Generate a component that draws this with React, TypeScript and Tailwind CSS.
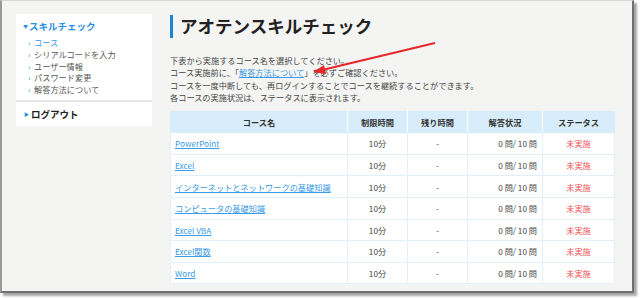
const courses = [
  "PowerPoint",
  "Excel",
  "インターネットとネットワークの基礎知識",
  "コンピュータの基礎知識",
  "Excel VBA",
  "Excel関数",
  "Word",
];

const menu = ["コース", "シリアルコードを入力", "ユーザー情報", "パスワード変更", "解答方法について"];

export default function App() {
  return (
    <div className="w-[640px] h-[298px] bg-white overflow-hidden" style={{ fontFamily: '"Noto Sans CJK JP", "Noto Sans", sans-serif' }}>
      <div className="relative w-[634px] h-[293px] bg-[#f4f4f3] border-l-2 border-r-2 border-b-2 border-t border-l-[#9a9a9a] border-r-[#6f6f6f] border-b-[#6f6f6f] border-t-[#d8d8d8] shadow-[3px_3px_2px_rgba(0,0,0,0.35)] flex pt-[13px] pl-[14px]">
        {/* sidebar */}
        <div className="w-[136px] shrink-0">
          <div className="bg-white pt-[6px] pb-[7px] h-[86px]">
            <div className="flex items-center pl-[7px] text-[9.5px] leading-[12px] font-bold text-[#2a8fe0]">
              <span className="text-[5px] mr-[1px]">▼</span>スキルチェック
            </div>
            <ul className="mt-[5px] pl-[12px] text-[8.2px] leading-[11.8px] text-[#555]">
              {menu.map((m, i) => (
                <li key={m} className="flex items-center">
                  <span className="text-[#2a8fe0] text-[8px] w-[6px]">›</span>
                  <span className={i === 0 ? "text-[#3a9be6]" : ""}>{m}</span>
                </li>
              ))}
            </ul>
          </div>
          <div className="h-[2px] bg-[#e6e6e6]" />
          <div className="bg-white h-[24px] flex items-center pl-[8px] text-[9.5px] font-bold text-[#222]">
            <span className="text-[#2a8fe0] text-[5px] mr-[2px]">▶</span>ログアウト
          </div>
        </div>

        {/* main */}
        <div className="ml-[18px] w-[444px]">
          <div className="flex items-center h-[24px]">
            <div className="w-[3px] h-[23px] bg-[#1a86d8]" />
            <h1 className="ml-[7px] text-[17.5px] leading-[24px] font-bold text-[#222]">アオテンスキルチェック</h1>
          </div>
          <div className="mt-[16px] text-[8.2px] leading-[12.3px] text-[#444]">
            <p>下表から実施するコース名を選択してください。</p>
            <p>
              コース実施前に、「<span className="text-[#3a9be6] underline">解答方法について</span>」を必ずご確認ください。
            </p>
            <p>コースを一度中断しても、再ログインすることでコースを継続することができます。</p>
            <p>各コースの実施状況は、ステータスに表示されます。</p>
          </div>
          <table className="mt-[8px] w-[444px] border-collapse text-[8.2px] text-[#444] table-fixed">
            <colgroup>
              <col className="w-[177px]" />
              <col className="w-[60px]" />
              <col className="w-[60px]" />
              <col className="w-[75px]" />
              <col className="w-[72px]" />
            </colgroup>
            <thead>
              <tr className="h-[21px] bg-[#d8edfc] font-bold text-[#333]">
                <th className="border border-[#d8edfc] border-r-white">コース名</th>
                <th className="border border-[#d8edfc] border-r-white">制限時間</th>
                <th className="border border-[#d8edfc] border-r-white">残り時間</th>
                <th className="border border-[#d8edfc] border-r-white">解答状況</th>
                <th className="border border-[#d8edfc]">ステータス</th>
              </tr>
            </thead>
            <tbody>
              {courses.map((c) => (
                <tr key={c} className="h-[21.6px] bg-white">
                  <td className="border border-[#e2f0fb] pl-[4px]">
                    <span className="text-[#3a9be6] underline">{c}</span>
                  </td>
                  <td className="border border-[#e2f0fb] text-center">10分</td>
                  <td className="border border-[#e2f0fb] text-center">-</td>
                  <td className="border border-[#e2f0fb] text-right pr-[5px]">0 問/ 10 問</td>
                  <td className="border border-[#e2f0fb] text-center text-[#ee5555]">未実施</td>
                </tr>
              ))}
            </tbody>
          </table>
        </div>

        {/* annotation arrow */}
        <svg className="absolute left-0 top-0 pointer-events-none" width="634" height="293">
          <line x1="433" y1="42" x2="320" y2="69" stroke="#e8262a" strokeWidth="1.8" />
          <polygon points="311,71 322,64 324,73" fill="#e8262a" />
        </svg>
      </div>
    </div>
  );
}
